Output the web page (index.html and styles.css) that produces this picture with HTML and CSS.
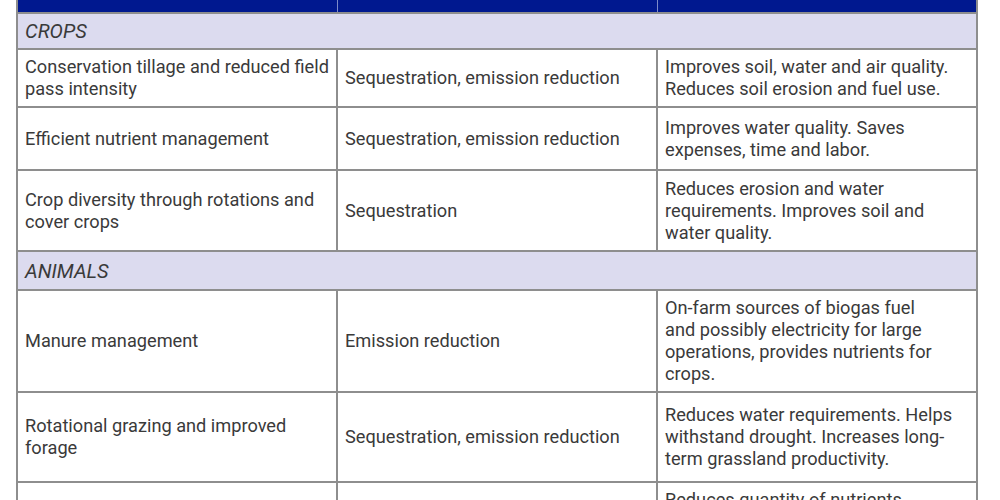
FILE: index.html
```html
<!DOCTYPE html>
<html lang="en">
<head>
<meta charset="utf-8">
<title>Practices</title>
<link rel="stylesheet" href="styles.css">
</head>
<body>
<table class="practices">
  <colgroup>
    <col class="c1"><col class="c2"><col class="c3">
  </colgroup>
  <thead>
    <tr class="head"><th></th><th></th><th></th></tr>
  </thead>
  <tbody>
    <tr class="section"><td colspan="3">CROPS</td></tr>
    <tr class="r1">
      <td>Conservation tillage and reduced field pass intensity</td>
      <td>Sequestration, emission reduction</td>
      <td>Improves soil, water and air quality. Reduces soil erosion and fuel use.</td>
    </tr>
    <tr class="r2">
      <td>Efficient nutrient management</td>
      <td>Sequestration, emission reduction</td>
      <td>Improves water quality. Saves expenses, time and labor.</td>
    </tr>
    <tr class="r3">
      <td>Crop diversity through rotations and cover crops</td>
      <td>Sequestration</td>
      <td>Reduces erosion and water requirements. Improves soil and water quality.</td>
    </tr>
    <tr class="section animals"><td colspan="3">ANIMALS</td></tr>
    <tr class="r4">
      <td>Manure management</td>
      <td>Emission reduction</td>
      <td>On-farm sources of biogas fuel<br>and possibly electricity for large operations, provides nutrients for crops.</td>
    </tr>
    <tr class="r5">
      <td>Rotational grazing and improved forage</td>
      <td>Sequestration, emission reduction</td>
      <td>Reduces water requirements. Helps withstand drought. Increases long-term grassland productivity.</td>
    </tr>
    <tr class="r6">
      <td>Feed management</td>
      <td>Emission reduction</td>
      <td class="top">Reduces quantity of nutrients excreted by animals and improves feed efficiency.</td>
    </tr>
  </tbody>
</table>
</body>
</html>
```

FILE: styles.css
```css
html, body {
  margin: 0;
  padding: 0;
  background: #ffffff;
}

body {
  font-family: Roboto, "Liberation Sans", Arial, sans-serif;
  color: #3a3a3a;
  font-size: 18.2px;
  line-height: 22px;
}

.practices {
  border-collapse: collapse;
  margin-left: 16px;
  width: 961px;
  table-layout: fixed;
}

.practices col {
  width: 320px;
}

.practices th,
.practices td {
  border: 2px solid #8e8e8e;
  padding: 0 7px 0 7px;
  vertical-align: middle;
  text-align: left;
}

.head th {
  background: #00188f;
  height: 12px;
  padding: 0;
  border-top: none;
  border-bottom: none;
  border-left: 1px solid #7d8ac9;
  border-right: 1px solid #7d8ac9;
}

.head th:first-child {
  border-left: 2px solid #8e8e8e;
}

.head th:last-child {
  border-right: 2px solid #8e8e8e;
}

.section td {
  background: #dcdbef;
  font-style: italic;
  font-size: 20px;
  height: 34px;
}

.animals td {
  height: 37px;
}

.r1 td { height: 56px; }
.r2 td { height: 61px; }
.r3 td { height: 79px; }
.r4 td { height: 100px; }
.r5 td { height: 88px; }
.r6 td { height: 160px; }

.r6 td.top {
  vertical-align: top;
  padding-top: 6px;
}
```
